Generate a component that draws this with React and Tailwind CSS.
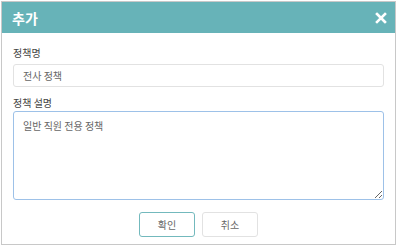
export default function App() {
  return (
    <div
      className="w-[397px] h-[246px] bg-white p-px"
      style={{ fontFamily: '"Noto Sans CJK KR", "Noto Sans", sans-serif' }}
    >
      <div className="h-full border border-[#c8c8c8] flex flex-col">
        <div className="h-[31px] bg-[#67b3b8] flex items-center justify-between pl-[10px] pr-[8px] shrink-0">
          <span className="text-white text-[14px] font-bold leading-none">추가</span>
          <svg width="12" height="12" viewBox="0 0 12 12">
            <path d="M2 2L10 10M10 2L2 10" stroke="white" strokeWidth="2.6" strokeLinecap="square" />
          </svg>
        </div>
        <div className="flex-1 px-[11px] pt-[15px] flex flex-col">
          <label className="text-[10px] text-[#444] leading-none">정책명</label>
          <input
            readOnly
            value="전사 정책"
            className="mt-[6px] h-[23px] w-full border border-[#e2e2e2] rounded-[3px] px-[9px] text-[10px] text-[#666] outline-none"
          />
          <label className="mt-[11px] text-[10px] text-[#444] leading-none">정책 설명</label>
          <textarea
            readOnly
            value="일반 직원 전용 정책"
            className="mt-[3px] h-[89px] w-full border border-[#9dc1e8] rounded-[3px] px-[9px] py-[6px] text-[10px] text-[#666] outline-none resize-y"
          />
          <div className="flex justify-center gap-[7px] mt-[12px]">
            <button className="w-[56px] h-[25px] border border-[#73b9bd] rounded-[3px] text-[10px] text-[#666] bg-white">
              확인
            </button>
            <button className="w-[56px] h-[25px] border border-[#e2e2e2] rounded-[3px] text-[10px] text-[#666] bg-white">
              취소
            </button>
          </div>
        </div>
      </div>
    </div>
  );
}
